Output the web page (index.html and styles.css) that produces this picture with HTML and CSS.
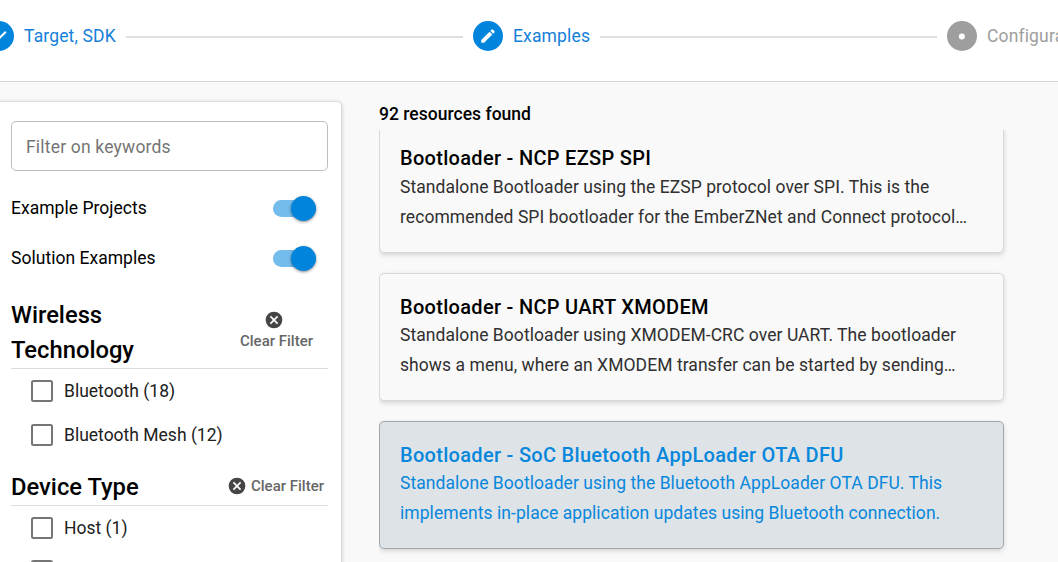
FILE: index.html
```html
<!DOCTYPE html>
<html lang="en">
<head>
<meta charset="utf-8">
<title>Examples</title>
<link rel="stylesheet" href="styles.css">
</head>
<body>
<header class="stepper">
  <div class="step">
    <svg class="step-icon" viewBox="0 0 30 30"><circle cx="15" cy="15" r="15" fill="#0084dc"/><path d="M9.2 15.3l4 4 8.6-8.6" fill="none" stroke="#fff" stroke-width="2"/></svg>
    <span class="step-label">Target, SDK</span>
  </div>
  <div class="step-line"></div>
  <div class="step">
    <svg class="step-icon" viewBox="0 0 30 30"><circle cx="15" cy="15" r="15" fill="#0084dc"/><g transform="translate(6 6) scale(.75)"><path fill="#fff" d="M3 17.25V21h3.75L17.81 9.94l-3.75-3.75L3 17.25zM20.71 7.04a1 1 0 0 0 0-1.41l-2.34-2.34a1 1 0 0 0-1.41 0l-1.83 1.83 3.75 3.75 1.83-1.83z"/></g></svg>
    <span class="step-label">Examples</span>
  </div>
  <div class="step-line"></div>
  <div class="step step-pending">
    <svg class="step-icon" viewBox="0 0 30 30"><circle cx="15" cy="15" r="15" fill="#9e9e9e"/><circle cx="14.8" cy="15.5" r="3" fill="#fff"/></svg>
    <span class="step-label">Configuration</span>
  </div>
</header>
<main class="content">
  <aside class="filters">
    <input class="keyword" type="text" placeholder="Filter on keywords">
    <div class="switch-row"><span>Example Projects</span><span class="switch"><i class="knob"></i></span></div>
    <div class="switch-row"><span>Solution Examples</span><span class="switch"><i class="knob"></i></span></div>
    <section class="group">
      <div class="group-head">
        <h2>Wireless Technology</h2>
        <button class="clear clear-stacked"><svg viewBox="0 0 20 20"><path fill="#454545" d="M10 1.67a8.33 8.33 0 1 0 0 16.66 8.33 8.33 0 0 0 0-16.66zm4.17 11.33L13 14.17l-3-3-3 3L5.83 13l3-3-3-3L7 5.83l3 3 3-3L14.17 7l-3 3z"/></svg><span>Clear Filter</span></button>
      </div>
      <label class="option"><i class="box"></i>Bluetooth (18)</label>
      <label class="option"><i class="box"></i>Bluetooth Mesh (12)</label>
    </section>
    <section class="group">
      <div class="group-head">
        <h2>Device Type</h2>
        <button class="clear"><svg viewBox="0 0 20 20"><path fill="#454545" d="M10 1.67a8.33 8.33 0 1 0 0 16.66 8.33 8.33 0 0 0 0-16.66zm4.17 11.33L13 14.17l-3-3-3 3L5.83 13l3-3-3-3L7 5.83l3 3 3-3L14.17 7l-3 3z"/></svg><span>Clear Filter</span></button>
      </div>
      <label class="option"><i class="box"></i>Host (1)</label>
      <label class="option option-tight"><i class="box"></i></label>
    </section>
  </aside>
  <section class="results">
    <p class="count">92 resources found</p>
    <div class="list">
      <article class="card">
        <h3>Bootloader - NCP EZSP SPI</h3>
        <p>Standalone Bootloader using the EZSP protocol over SPI. This is the<br>recommended SPI bootloader for the EmberZNet and Connect protocol…</p>
      </article>
      <article class="card">
        <h3>Bootloader - NCP UART XMODEM</h3>
        <p>Standalone Bootloader using XMODEM-CRC over UART. The bootloader<br>shows a menu, where an XMODEM transfer can be started by sending…</p>
      </article>
      <article class="card selected">
        <h3>Bootloader - SoC Bluetooth AppLoader OTA DFU</h3>
        <p>Standalone Bootloader using the Bluetooth AppLoader OTA DFU. This<br>implements in-place application updates using Bluetooth connection.</p>
      </article>
    </div>
  </section>
</main>
</body>
</html>
```

FILE: styles.css
```css
* { box-sizing: border-box; }
body {
  margin: 0;
  width: 1058px;
  height: 562px;
  overflow: hidden;
  display: flex;
  flex-direction: column;
  background: #f9f9f9;
  color: #000;
  font: 400 17.5px/30px Roboto, sans-serif;
}
h2, h3, p { margin: 0; }

.stepper {
  flex: none;
  display: flex;
  height: 82px;
  padding-top: 21px;
  margin-left: -16px;
  background: #fff;
  border-bottom: 1px solid #d6d6d6;
  white-space: nowrap;
  overflow: hidden;
}
.step { flex: none; display: flex; gap: 10px; height: 30px; color: #1480da; letter-spacing: .15px; }
.step:nth-child(1) { width: 132px; }
.step:nth-child(3) { width: 117px; }
.step-icon { flex: none; width: 30px; height: 30px; }
.step-pending { color: #9e9e9e; }
.step-line { flex: none; height: 2px; margin: 15px 10px 0; background: #e0e0e0; width: 337px; }

.content { flex: 1; min-height: 0; display: flex; overflow: hidden; }
.filters {
  width: 350px;
  flex: none;
  height: 520px;
  margin: 19px 0 0 -8px;
  padding: 19px 13px 0 18px;
  background: #fff;
  border: 1px solid #dcdcdc;
  border-radius: 5px;
  box-shadow: 0 1px 4px rgba(0, 0, 0, .18);
}
.keyword {
  display: block;
  width: 317px;
  height: 50px;
  padding: 1px 14px 0;
  border: 1px solid #bdbdbd;
  border-radius: 5px;
  background: #fff;
  font: inherit;
  letter-spacing: .19px;
  outline: none;
}
.keyword::placeholder { color: #757575; opacity: 1; }
.switch-row {
  display: flex;
  justify-content: space-between;
  align-items: center;
  height: 50px;
  padding-right: 12px;
  letter-spacing: .03px;
}
.keyword + .switch-row { margin-top: 12px; }
.switch {
  display: flex;
  justify-content: flex-end;
  align-items: center;
  width: 43px;
  height: 17px;
  margin-top: 1px;
  border-radius: 9px;
  background: #73bceb;
}
.knob {
  width: 25px;
  height: 25px;
  border-radius: 50%;
  background: #0084dc;
  box-shadow: 0 1px 3px rgba(0, 0, 0, .45);
}

.group-head {
  display: flex;
  justify-content: space-between;
  align-items: center;
  border-bottom: 1px solid #dcdcdc;
}
.group:nth-of-type(1) .group-head { height: 86px; padding-top: 14px; }
.group:nth-of-type(2) .group-head { height: 49px; padding-top: 12px; }
h2 {
  width: 140px;
  font-size: 23.75px;
  font-weight: 500;
  line-height: 35px;
}
.clear {
  display: flex;
  align-items: center;
  gap: 4px;
  margin-bottom: 3px;
  padding: 0 4px 0 0;
  border: 0;
  background: none;
  color: #666;
  font: 500 15px/20px Roboto, sans-serif;
}
.clear svg { width: 20px; height: 20px; }
.clear-stacked { flex-direction: column; gap: 1px; margin: 0 11px 4px 0; }
.clear-stacked svg { margin-right: 4px; }
.option {
  display: flex;
  align-items: center;
  gap: 11px;
  height: 44px;
  padding-left: 20px;
  color: #212121;
}
.option-tight { margin-top: -1px; }
.box {
  width: 22px;
  height: 22px;
  border: 2px solid #757575;
  border-radius: 2.5px;
}

.results { width: 680px; padding: 17px 0 0 37px; }
.count { height: 31px; font-weight: 500; letter-spacing: .02px; }
.list { height: 432px; overflow: hidden; padding-right: 18px; }
.card {
  width: 625px;
  height: 128px;
  margin-bottom: 20px;
  padding: 19px 20px 0;
  border: 1px solid #d8d8d8;
  border-radius: 5px;
  background: #f9f9f9;
  box-shadow: 0 2px 5px rgba(0, 0, 0, .15);
  color: #303030;
  white-space: nowrap;
}
.card:first-child { margin-top: -5px; }
.card h3 {
  color: #000;
  font-size: 20px;
  font-weight: 500;
  line-height: 28px;
  letter-spacing: .3px;
}
.card:first-child h3 { margin: -1px 0 2px; }
.card p { line-height: 30px; margin-top: -1px; letter-spacing: .06px; }
.card:first-child p { margin-top: -2px; }
.selected { background: #dee3e7; border-color: #a1a8ad; }
.selected, .selected h3 { color: #0787dc; }
```
